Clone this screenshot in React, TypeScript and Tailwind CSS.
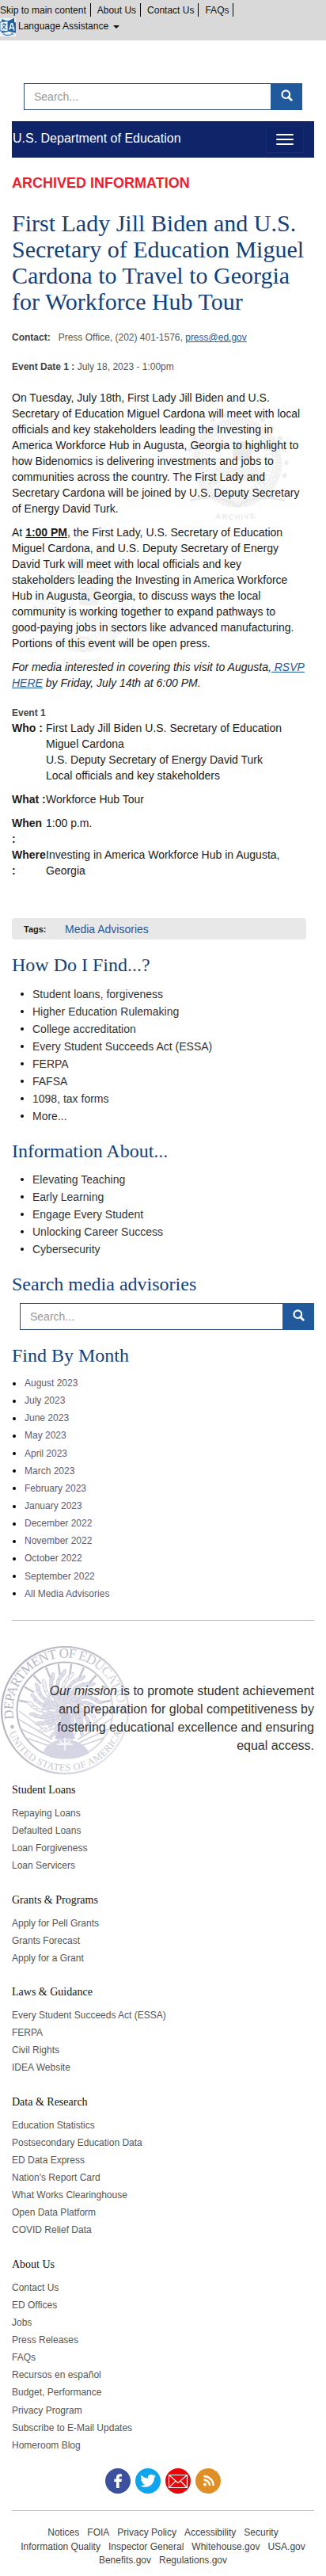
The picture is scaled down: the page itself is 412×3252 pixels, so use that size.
import React from "react";

const howDoI = [
  "Student loans, forgiveness",
  "Higher Education Rulemaking",
  "College accreditation",
  "Every Student Succeeds Act (ESSA)",
  "FERPA",
  "FAFSA",
  "1098, tax forms",
  "More...",
];

const infoAbout = [
  "Elevating Teaching",
  "Early Learning",
  "Engage Every Student",
  "Unlocking Career Success",
  "Cybersecurity",
];

const months = [
  "August 2023",
  "July 2023",
  "June 2023",
  "May 2023",
  "April 2023",
  "March 2023",
  "February 2023",
  "January 2023",
  "December 2022",
  "November 2022",
  "October 2022",
  "September 2022",
  "All Media Advisories",
];

const groups = [
  { title: "Student Loans", items: ["Repaying Loans", "Defaulted Loans", "Loan Forgiveness", "Loan Servicers"] },
  { title: "Grants & Programs", items: ["Apply for Pell Grants", "Grants Forecast", "Apply for a Grant"] },
  { title: "Laws & Guidance", items: ["Every Student Succeeds Act (ESSA)", "FERPA", "Civil Rights", "IDEA Website"] },
  {
    title: "Data & Research",
    items: [
      "Education Statistics",
      "Postsecondary Education Data",
      "ED Data Express",
      "Nation's Report Card",
      "What Works Clearinghouse",
      "Open Data Platform",
      "COVID Relief Data",
    ],
  },
  {
    title: "About Us",
    items: [
      "Contact Us",
      "ED Offices",
      "Jobs",
      "Press Releases",
      "FAQs",
      "Recursos en español",
      "Budget, Performance",
      "Privacy Program",
      "Subscribe to E-Mail Updates",
      "Homeroom Blog",
    ],
  },
];

const footerRows = [
  ["Notices", "FOIA", "Privacy Policy", "Accessibility", "Security"],
  ["Information Quality", "Inspector General", "Whitehouse.gov", "USA.gov"],
  ["Benefits.gov", "Regulations.gov"],
];

function TranslateIcon() {
  return (
    <svg width="20" height="24" viewBox="0 0 20 24" className="block shrink-0">
      <rect x="0" y="1" width="20" height="23" fill="#eef3f8" />
      <path d="M2 2 L10 4.5 V18 L2 20 Z" fill="#2f6ca8" />
      <path d="M0 6 L10 4.5 V17.5 L0 17 Z" fill="#f4f8fc" stroke="#2f6ca8" strokeWidth="1" />
      <path d="M10 4.5 L18 0.8 V6 L20 6.5 V19.5 L10 17.5 Z" fill="#23609e" />
      <path d="M2.5 8.5h5.5M5 7v1.5M7 8.5C6.5 11.5 4.5 13.5 2 14.8M3.5 10.5C4.500 12.500 6 14 8 14.800" fill="none" stroke="#2a66a3" strokeWidth="1.2" />
      <path d="M12 15.5 L14.300 7.700 H15.500 L18 16.500 M12.800 13 L17 13.500" fill="none" stroke="#fff" strokeWidth="1.4" />
      <path d="M4 20.500C7.500 23.500 13 23 16 20.500" fill="none" stroke="#4f84b8" strokeWidth="1.4" />
      <path d="M13.800 19.800 L17 19.500 L16.300 22.300Z" fill="#4f84b8" />
    </svg>
  );
}

function SearchIcon() {
  return (
    <svg width="15" height="15" viewBox="0 0 15 15" className="mt-[-4px] block">
      <circle cx="6.300" cy="6.200" r="4.800" fill="none" stroke="#fff" strokeWidth="2.200" />
      <path d="M9.600 9.700 L13.300 13.300" stroke="#fff" strokeWidth="2.700" strokeLinecap="round" />
    </svg>
  );
}

function SearchBox() {
  return (
    <div className="flex h-[34px]">
      <div className="flex flex-1 items-center border border-r-0 border-[#2f4a78] bg-white pl-3 text-sm text-[#999]">
        Search...
      </div>
      <div className="flex w-10 items-center justify-center bg-[#205a9d]">
        <SearchIcon />
      </div>
    </div>
  );
}

function SectionHeading({ children }: { children: React.ReactNode }) {
  return (
    <h2 className="h-[26px] font-['Liberation_Serif',serif] text-2xl leading-[26px] text-[#143f78]">{children}</h2>
  );
}

function DotList({ items }: { items: string[] }) {
  return (
    <ul>
      {items.map((t) => (
        <li key={t} className="flex h-[22px] items-center pl-[11px] text-sm leading-[22px] text-[#333]">
          <span className="mr-[11px] size-1 rounded-full bg-[#111]" />
          {t}
        </li>
      ))}
    </ul>
  );
}

function ArchiveMark({ id, className, tone }: { id: string; className: string; tone: string }) {
  const ticks = Array.from({ length: 48 }, (_, i) => i * 7.5);
  const stars = Array.from({ length: 15 }, (_, i) => -195 + i * 15);
  return (
    <svg viewBox="0 0 150 140" width="150" height="140" className={className} aria-hidden="true">
      <g transform="translate(75 64)" fill="none" stroke={tone}>
        <circle r="52" strokeWidth="9" strokeDasharray="1.500 1" />
        <circle r="45.500" strokeWidth="1.500" />
        {ticks.map((a) => (
          <path key={a} d="M35 0H44" strokeWidth="1.400" transform={`rotate(${a})`} />
        ))}
        {stars.map((a) => (
          <path key={a} d="M62 -4l1.200 2.600 2.900.3-2.200 1.900.6 2.800-2.500-1.400-2.500 1.400.6-2.800-2.200-1.900 2.900-.3z" fill={tone} stroke="none" transform={`rotate(${a})`} />
        ))}
        <path d="M-6 -22C0 -30 14 -28 20 -20L18 -4C10 0 2 -2 -6 -4Z" fill={tone} stroke="none" />
        <path d="M-14 0C-28 4 -36 16 -36 30C-14 20 14 20 36 30C36 16 28 4 14 0C8 8 -8 8 -14 0Z" fill={tone} stroke="none" opacity=".6" />
        <path d="M-60 48C-40 42 -24 42 -10 50C-12 44 -8 38 0 38C8 38 12 44 10 50C24 42 40 42 60 48" strokeWidth="3" />
        <path d="M-8 48Q0 62 8 48" strokeWidth="3" />
      </g>
      <path id={id} d="M34 132Q74 141 116 130" fill="none" />
      <text fill={tone} fontFamily="Liberation Sans, sans-serif" fontWeight="700" fontSize="9.500">
        <textPath href={`#${id}`} startOffset="16%" textLength="51">ARCHIVE</textPath>
      </text>
    </svg>
  );
}

function Seal() {
  const rays = [-78, -60, -42, -24, -8, 8, 24, 42, 60, 78];
  const leaves = Array.from({ length: 96 }, (_, i) => {
    const a = i * 2.399;
    const r = 5 + Math.sqrt(i) * 4;
    return { x: Math.cos(a) * r, y: Math.sin(a) * r * 0.95 - 6, rot: (a * 180) / Math.PI };
  });
  return (
    <svg viewBox="0 0 164 166" width="164" height="166" className="absolute left-0 top-[30px]" aria-hidden="true">
      <defs>
        <linearGradient id="sealFade" gradientUnits="userSpaceOnUse" x1="0" y1="20" x2="164" y2="110">
          <stop offset="0" stopColor="#adadbc" />
          <stop offset="0.500" stopColor="#c0c0cc" />
          <stop offset="1" stopColor="#e6e6ec" />
        </linearGradient>
        <path id="sealTop" d="M17.500 94A66 66 0 1 1 147.500 94" />
        <path id="sealBottom" d="M8.500 102A76 76 0 0 0 156 102" />
      </defs>
      <circle cx="82" cy="83" r="80" fill="none" stroke="url(#sealFade)" strokeWidth="2.200" />
      <circle cx="82" cy="83" r="60.500" fill="none" stroke="url(#sealFade)" strokeWidth="2" />
      {rays.map((a) => (
        <path key={a} d="M82 24V38" stroke="#c3c3d0" strokeWidth="2.400" transform={`rotate(${a} 82 83)`} />
      ))}
      <g stroke="#d0d0dc" strokeWidth="1.500" fill="none">
        <path d="M23 94L66 120M27 107L64 124M33 118L62 128M24 84L58 109" />
        <path d="M141 94L98 120M137 107L100 124M131 118L102 128M140 84L106 109" />
      </g>
      <circle cx="80" cy="84" r="27" fill="#d8d8e5" opacity=".8" />
      {leaves.map((l, i) => (
        <ellipse
          key={i}
          cx={82 + l.x}
          cy={83 + l.y}
          rx="5"
          ry="2"
          fill={i % 3 === 0 ? "#f5f5f8" : "#e0e0eb"}
          stroke="#c8c8d8"
          strokeWidth=".8"
          transform={`rotate(${l.rot + 25} ${82 + l.x} ${83 + l.y})`}
        />
      ))}
      <path d="M76 86C78 98 76 106 69 119H95C88 106 87 98 89 86Z" fill="#cdcdde" />
      <path d="M54 137C62 114 102 114 113 137C98 147 70 147 54 137Z" fill="#d5d5e4" />
      <path d="M72 126H92M82 118V134M75 121Q82 130 89 121" stroke="#f7f7fa" strokeWidth="1.800" fill="none" />
      <text fill="url(#sealFade)" fontFamily="Liberation Serif, serif" fontSize="17">
        <textPath href="#sealTop" textLength="222">DEPARTMENT OF EDUCATION</textPath>
      </text>
      <circle cx="15.500" cy="104" r="2.400" fill="#bebecb" />
      <text fill="#c8c8d2" fontFamily="Liberation Serif, serif" fontSize="12.500">
        <textPath href="#sealBottom" startOffset="10" textLength="182">UNITED STATES OF AMERICA</textPath>
      </text>
    </svg>
  );
}

function SocialIcons() {
  return (
    <div className="flex h-8 justify-center gap-1.5">
      <svg width="32" height="32" viewBox="0 0 32 32">
        <circle cx="16" cy="16" r="16" fill="#3d509f" />
        <path d="M14 25V17H11.300V13.500H14V11.400C14 8.600 15.700 7.200 18.200 7.200H21V10.600H19C17.900 10.600 17.600 11.100 17.600 12V13.500H21L20.500 17H17.600V25Z" fill="#fff" />
      </svg>
      <svg width="32" height="32" viewBox="0 0 32 32">
        <circle cx="16" cy="16" r="16" fill="#0fa5ee" />
        <path
          transform="translate(6.300 6) scale(.82)"
          d="M23.953 4.570a10 10 0 01-2.825.775 4.958 4.958 0 002.163-2.723c-.951.555-2.005.959-3.127 1.184a4.920 4.920 0 00-8.384 4.482C7.690 8.095 4.067 6.130 1.640 3.162a4.822 4.822 0 00-.666 2.475c0 1.710.870 3.213 2.188 4.096a4.904 4.904 0 01-2.228-.616v.060a4.923 4.923 0 003.946 4.827 4.996 4.996 0 01-2.212.085 4.936 4.936 0 004.604 3.417 9.867 9.867 0 01-6.102 2.105c-.390 0-.779-.023-1.170-.067a13.995 13.995 0 007.557 2.209c9.053 0 13.998-7.496 13.998-13.985 0-.210 0-.420-.015-.630A9.935 9.935 0 0024 4.590z"
          fill="#fff"
        />
      </svg>
      <svg width="32" height="32" viewBox="0 0 32 32">
        <circle cx="16" cy="16" r="16" fill="#ea0508" />
        <path d="M4.500 8.500H27.500V24.500H4.500ZM4.500 8.500L16 18.500L27.500 8.500M4.500 24.500L13 16M27.500 24.500L19 16" fill="none" stroke="#fff" strokeWidth="1.100" />
      </svg>
      <svg width="32" height="32" viewBox="0 0 32 32">
        <circle cx="16" cy="16" r="16" fill="#de8f26" />
        <circle cx="12" cy="20.500" r="1.900" fill="#fff" />
        <path d="M10.500 14.500A7.500 7.500 0 0 1 18 22M10.500 10A12 12 0 0 1 22.700 22" fill="none" stroke="#fff" strokeWidth="2.400" />
      </svg>
    </div>
  );
}

export default function App() {
  return (
    <div className="h-[3252px] w-[412px] overflow-hidden bg-white font-['Liberation_Sans',Arial,sans-serif] text-sm leading-5 text-[#1b1b1b]">
      <header className="h-[51px] bg-[#d9d9d9] pt-[3px] text-xs leading-5 text-[#111]">
        <div className="flex h-[19px] items-center whitespace-nowrap">
          {["Skip to main content", "About Us", "Contact Us", "FAQs"].map((t) => (
            <span key={t} className="mr-2 flex h-[17px] items-center border-r border-black pr-[5px]">
              {t}
            </span>
          ))}
        </div>
        <div className="flex h-6 items-start">
          <TranslateIcon />
          <span className="ml-[3px] mt-px">Language Assistance</span>
          <svg width="8" height="4" viewBox="0 0 8 4" className="ml-1.5 mt-[10px]">
            <path d="M0 0H8L4 4Z" fill="#111" />
          </svg>
        </div>
      </header>

      <div className="mt-[54px] pl-[30px] pr-[30px]">
        <SearchBox />
      </div>

      <div className="px-[15px]">
        <nav className="mt-3.5 flex h-[46px] items-center justify-between bg-[#10246a] pl-px pr-[13px] text-base text-white">
          <span className="mt-[-3px]">U.S. Department of Education</span>
          <span className="flex h-[34px] w-12 flex-col items-center justify-center gap-1 border border-[#152c73] bg-[#0e2268]">
            <span className="h-0.5 w-[22px] rounded-sm bg-white" />
            <span className="h-0.5 w-[22px] rounded-sm bg-white" />
            <span className="h-0.5 w-[22px] rounded-sm bg-white" />
          </span>
        </nav>

        <div className="mt-[22px] h-5 text-lg font-bold leading-5 text-[#ed1c2e]">ARCHIVED INFORMATION</div>

        <h1 className="mt-6 whitespace-nowrap font-['Liberation_Serif',serif] text-[30px] leading-[33px] text-[#143f78]">
          First Lady Jill Biden and U.S.
          <br />
          Secretary of Education Miguel
          <br />
          Cardona to Travel to Georgia
          <br />
          for Workforce Hub Tour
        </h1>

        <div className="mt-[21px] flex h-[17px] text-xs leading-[17px] text-[#555]">
          <b className="mr-2.5 text-[#444]">Contact:</b>
          <span>
            Press Office, (202) 401-1576, <a className="text-[#1f5a9e] underline">press@ed.gov</a>
          </span>
        </div>
        <div className="mt-5 h-[17px] text-xs leading-[17px] text-[#555]">
          <b className="text-[#444]">Event Date 1 :</b> July 18, 2023 - 1:00pm
        </div>

        <article className="relative mt-5 whitespace-nowrap">
          <ArchiveMark id="markA" tone="#ebebeb" className="absolute left-[210px] top-[28px]" />
          <ArchiveMark id="markB" tone="#f1f1f1" className="absolute left-[16px] top-[211px]" />
          <div className="relative">
            <p>
              On Tuesday, July 18th, First Lady Jill Biden and U.S.
              <br />
              Secretary of Education Miguel Cardona will meet with local
              <br />
              officials and key stakeholders leading the Investing in
              <br />
              America Workforce Hub in Augusta, Georgia to highlight to
              <br />
              how Bidenomics is delivering investments and jobs to
              <br />
              communities across the country. The First Lady and
              <br />
              Secretary Cardona will be joined by U.S. Deputy Secretary
              <br />
              of Energy David Turk.
            </p>
            <p className="mt-2.5">
              At <b className="underline">1:00 PM</b>, the First Lady, U.S. Secretary of Education
              <br />
              Miguel Cardona, and U.S. Deputy Secretary of Energy
              <br />
              David Turk will meet with local officials and key
              <br />
              stakeholders leading the Investing in America Workforce
              <br />
              Hub in Augusta, Georgia, to discuss ways the local
              <br />
              community is working together to expand pathways to
              <br />
              good-paying jobs in sectors like advanced manufacturing.
              <br />
              Portions of this event will be open press.
            </p>
            <p className="mt-2.5 italic">
              For media interested in covering this visit to Augusta,
              <a className="text-[#1f5a9e] underline"> RSVP</a>
              <br />
              <a className="text-[#1f5a9e] underline">HERE</a> by Friday, July 14th at 6:00 PM.
            </p>
          </div>
        </article>

        <h3 className="mt-5 h-[17px] text-xs font-bold leading-[17px] text-[#444]">Event 1</h3>
        <dl className="grid grid-cols-[43px_1fr]">
          <dt className="font-bold">Who :</dt>
          <dd className="mb-2.5">
            First Lady Jill Biden U.S. Secretary of Education
            <br />
            Miguel Cardona
            <br />
            U.S. Deputy Secretary of Energy David Turk
            <br />
            Local officials and key stakeholders
          </dd>
          <dt className="whitespace-nowrap font-bold">What :</dt>
          <dd className="mb-2.5">Workforce Hub Tour</dd>
          <dt className="font-bold">
            When
            <br />:
          </dt>
          <dd>1:00 p.m.</dd>
          <dt className="font-bold">
            Where
            <br />:
          </dt>
          <dd>
            Investing in America Workforce Hub in Augusta,
            <br />
            Georgia
          </dd>
        </dl>

        <div className="mr-2.5 mt-[50px] flex h-[27px] items-center rounded-sm bg-[#e8e8e8] pl-[15px]">
          <b className="w-[52px] pt-px text-[11px]">Tags:</b>
          <a className="text-[#1f5a9e]">Media Advisories</a>
        </div>

        <div className="mt-[19px]">
          <SectionHeading>How Do I Find...?</SectionHeading>
        </div>
        <div className="mt-[13px]">
          <DotList items={howDoI} />
        </div>
        <div className="mt-5">
          <SectionHeading>Information About...</SectionHeading>
        </div>
        <div className="mt-3">
          <DotList items={infoAbout} />
        </div>
        <div className="mt-5">
          <SectionHeading>Search media advisories</SectionHeading>
        </div>
        <div className="mt-[11px] pl-2.5">
          <SearchBox />
        </div>
        <div className="mt-[19px]">
          <SectionHeading>Find By Month</SectionHeading>
        </div>
        <ul className="mt-3.5 h-[289px]">
          {months.map((m) => (
            <li key={m} className="flex items-center pb-[5px] pl-px text-xs leading-[17.14px] text-[#5d5a70]">
              <span className="mr-[11px] size-1 rounded-full bg-black" />
              {m}
            </li>
          ))}
        </ul>
        <hr className="mt-[18px] border-t border-[#bbb]" />
      </div>

      <section className="relative h-[206px] pr-[15px] pt-[78px]">
        <Seal />
        <p className="relative whitespace-nowrap text-right text-base leading-[22.86px] text-[#333]">
          <em>Our mission</em> is to promote student achievement
          <br />
          and preparation for global competitiveness by
          <br />
          fostering educational excellence and ensuring
          <br />
          equal access.
        </p>
      </section>

      <footer className="px-[15px]">
        <div className="h-[864px]">
          {groups.map((g) => (
            <div key={g.title} className="mb-[21px]">
              <h3 className="mb-[13.6px] font-['Liberation_Serif',serif] text-sm leading-[15.4px] text-[#111]">{g.title}</h3>
              <ul>
                {g.items.map((t) => (
                  <li key={t} className="pb-[5px] text-xs leading-[17.14px] text-[#555]">
                    {t}
                  </li>
                ))}
              </ul>
            </div>
          ))}
        </div>
        <SocialIcons />
        <hr className="mt-[21px] border-t border-[#bbb]" />
        <div className="mt-[19px] text-xs leading-[17.6px] text-[#444]">
          {footerRows.map((row) => (
            <div key={row[0]} className="flex justify-center gap-2.5 whitespace-nowrap">
              {row.map((t) => (
                <span key={t}>{t}</span>
              ))}
            </div>
          ))}
        </div>
      </footer>
    </div>
  );
}
